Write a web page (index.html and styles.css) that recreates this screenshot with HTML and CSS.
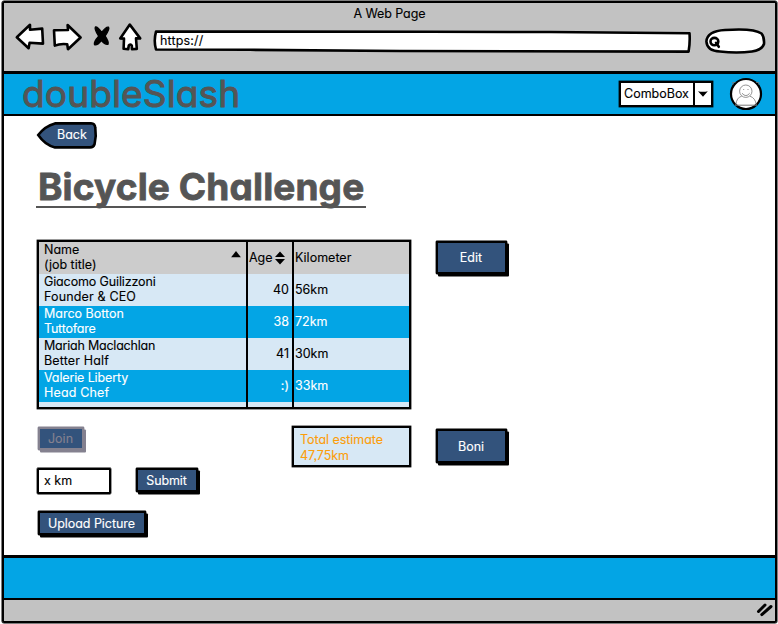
FILE: index.html
```html
<!DOCTYPE html>
<html lang="en">
<head>
<meta charset="utf-8">
<title>A Web Page</title>
<link rel="stylesheet" href="styles.css">
</head>
<body>
<div class="window">
  <header class="chrome">
    <div class="window-title">A Web Page</div>
    <div class="toolbar">
      <svg class="nav-icons" width="130" height="32" viewBox="14 22 130 32">
        <path class="outline" d="M16.8 37.3 L30 24.8 L30 29.8 L42.2 28.6 L43 43.6 L29.6 42.7 L28.6 48.2 Z"/>
        <path class="outline" d="M54 30.2 L68 30 L67.6 25 L80.6 37.5 L68 49.2 L67.2 44.2 Q60 43.4 54.8 45.6 Z"/>
        <path class="stop" d="M95.5 27 Q97.5 26.5 101.7 32.5 Q106 26.5 108.5 27.2 Q110 29 105 36 Q109 42 108 44.2 Q105 45 101.5 40.3 Q97 46 94.5 44.6 Q93.5 42 98.7 36.2 Q94 29 95.5 27 Z"/>
        <path class="outline" d="M129.8 24.6 L140.2 38.4 L136 38.4 L136.8 48.9 L132 49.2 L131.8 45.5 Q130 43.5 128.8 45.5 L128.2 49.2 L123.6 48.7 L124 38.6 L120.2 38.4 Z"/>
      </svg>
      <div class="url">
        <svg class="sketch" width="540" height="26" viewBox="152 28 540 26">
          <path class="outline" d="M156 31.6 L430 31.8 L550 32 L689.5 33.2 Q690.2 42 688.6 51.6 L400 51 L250 49.8 L156 49.5 Q153.5 41 156 31.6 Z"/>
        </svg>
        <span>https://</span>
      </div>
      <svg class="search" width="64" height="30" viewBox="703 26 64 30">
        <path class="outline" d="M706.4 41.5 Q707 31 725 30 Q754 28 761.5 33.5 Q764.5 37 764 44 Q762 50 752 51.5 Q737 53.5 720 51.5 Q707 51 706.4 41.5 Z"/>
        <ellipse class="outline" cx="714.4" cy="41.6" rx="3.9" ry="3.7"/>
        <path class="outline" d="M716 42.8 L718.8 46.8"/>
      </svg>
    </div>
  </header>
  <div class="banner">
    <div class="logo">doubleSlash</div>
    <div class="combo"><span class="combo-value">ComboBox</span><span class="combo-arrow"><svg width="12" height="8" viewBox="0 0 12 8"><path d="M1 1.2 Q6 2.2 10.8 1.2 L6 6.8 Z"/></svg></span></div>
    <svg class="avatar" width="34" height="34" viewBox="0 0 34 34">
      <circle cx="17" cy="17" r="15" fill="#fff" stroke="#000" stroke-width="2.2"/>
      <g fill="none" stroke="#777" stroke-width=".8">
        <circle cx="16.8" cy="14.2" r="6.2"/>
        <path d="M13 16.2 Q17 21 20.7 16.2 M14.7 12 v1 M19 12 v1 M6.8 28 Q7.5 20.5 12.7 19.2 M21 19.2 Q26.5 21 27.3 28"/>
        <path d="M6 28.2 H28" stroke-width="1"/>
        <path d="M3.5 5.5 h3 M27 5.5 h3 M3.8 5.5 v2.5 M30 5.5 v2.5"/>
      </g>
    </svg>
  </div>
  <main class="page">
    <a class="back">
      <svg class="sketch" width="62" height="30" viewBox="36 120 62 30"><path d="M38.2 135 Q45 126 55 123.4 L91 123.3 Q95 123.5 95.3 128 Q96.5 136 94.6 144 Q93.5 147.4 90 147.4 L55 147.4 Q45 145 38.2 135 Z"/></svg>
      <span class="back-text">Back</span>
    </a>
    <h1 class="headline">Bicycle Challenge</h1>
    <div class="board">
      <div class="people">
        <div class="row head"><div class="name">Name<br>(job title)<svg class="sort-up" width="10" height="7" viewBox="0 0 10 7"><path d="M5 0 L9.9 6.3 H.1 Z"/></svg></div><div class="age">Age<svg class="sort" width="12" height="14" viewBox="0 0 12 14"><path d="M6 .5 L11 6 H1 Z M1 8 H11 L6 13.5 Z"/></svg></div><div class="km">Kilometer</div></div>
        <div class="row"><div class="name"><span class="tight">Giacomo Guilizzoni</span><br><span class="loose">Founder &amp; CEO</span></div><div class="age">40</div><div class="km">56km</div></div>
        <div class="row picked"><div class="name">Marco Botton<br><span class="tighter">Tuttofare</span></div><div class="age">38</div><div class="km">72km</div></div>
        <div class="row"><div class="name"><span class="tighter">Mariah Maclachlan</span><br><span class="loose">Better Half</span></div><div class="age">41</div><div class="km">30km</div></div>
        <div class="row picked"><div class="name"><span class="tight">Valerie Liberty</span><br><span class="loose">Head Chef</span></div><div class="age">:)</div><div class="km">33km</div></div>
        <div class="row rest"><div class="name"></div><div class="age"></div><div class="km"></div></div>
      </div>
      <div class="button large edit">Edit</div>
      <div class="lower">
        <div class="entry">
          <div class="button join">Join</div>
          <div class="line"><div class="field">x km</div><div class="button submit">Submit</div></div>
          <div class="button upload">Upload Picture</div>
        </div>
        <div class="total">Total estimate<br>47,75km</div>
      </div>
      <div class="button large boni">Boni</div>
    </div>
  </main>
  <div class="footer-band"></div>
  <div class="status">
    <svg width="18" height="16" viewBox="0 0 18 16"><path class="grip" d="M2.5 9.5 L9 3 M5.8 12.6 L15 4.5"/></svg>
  </div>
</div>
</body>
</html>
```
FILE: styles.css
```css
* { box-sizing: border-box; }
body {
  margin: 0;
  padding: 1px 1px 1px 2px;
  background: #fff;
  font: 12.5px/15px Inter, "Liberation Sans", sans-serif;
  font-feature-settings: "cv11" 1, "ss03" 1;
  -webkit-text-stroke: .12px currentColor;
  color: #000;
}
.window {
  width: 775px;
  height: 622px;
  border: 2px solid #000;
  border-radius: 2px;
  box-shadow: 0 0 0 .5px #000;
  display: flex;
  flex-direction: column;
}
.outline { fill: #fff; stroke: #000; stroke-width: 2.6; stroke-linejoin: round; stroke-linecap: round; }
.stop { stroke: #000; stroke-width: 1.4; stroke-linejoin: round; }
.sketch { position: absolute; left: 0; top: 0; }
.chrome { height: 71px; flex: none; background: #c2c2c2; border-bottom: 3px solid #000; padding-top: 3px; }
.window-title { text-align: center; height: 16px; line-height: 16px; letter-spacing: -.1px; }
.toolbar { display: flex; padding-left: 10px; height: 32px; }
.nav-icons { flex: none; }
.url { position: relative; width: 540px; height: 26px; margin: 6px 11px 0 8px; padding: 5px 0 0 8px; letter-spacing: .15px; }
.url span { position: relative; }
.search { flex: none; margin-top: 4px; }
.banner {
  height: 42px; flex: none;
  background: #03a5e5;
  border-bottom: 2px solid #000;
  display: flex;
  align-items: center;
  padding: 0 12px 0 18px;
}
.logo { flex: 1; font-size: 37px; line-height: 40px; letter-spacing: .15px; color: #555; -webkit-text-stroke: 1px #555; }
.combo { display: flex; width: 94px; height: 26px; background: #fff; border: 2px solid #000; box-shadow: 0 0 0 .4px #000; margin-right: 16px; }
.combo-value { flex: 1; padding: 3px 0 0 3px; white-space: nowrap; }
.combo-arrow { width: 18px; border-left: 2px solid #000; display: flex; align-items: center; justify-content: center; }
.avatar { flex: none; }
.page { flex: 1; background: #fff; padding: 4px 0 0 32px; }
.back { display: block; position: relative; width: 62px; height: 30px; padding: 7px 0 0 21px; color: #fff; }
.back path { fill: #33537c; stroke: #000; stroke-width: 2.6; }
.back-text { position: relative; }
.headline {
  margin: 17px 0 32px;
  width: 330px; height: 41px;
  border-bottom: 2px solid #555;
  padding-left: 2px;
  font-size: 37px; line-height: 39px; font-weight: 700;
  letter-spacing: .13px;
  white-space: nowrap;
  color: #555;
  -webkit-text-stroke: .8px #555;
}
.board { display: grid; grid-template-columns: 374px 74px; column-gap: 25px; row-gap: 17px; padding-left: 1px; align-items: start; }
.people { width: 374px; height: 169px; border: 2px solid #000; box-shadow: 0 0 0 .4px #000; background: #d7e8f5; }
.row { display: grid; grid-template-columns: 209px 46px 1fr; height: 32px; background: #d7e8f5; }
.row > div { position: relative; white-space: nowrap; }
.row .name { padding: 0 0 0 5px; border-right: 2px solid #000; }
.row .age { border-right: 2px solid #000; text-align: right; padding: 8px 3px 0 0; }
.row .km { padding: 8px 0 0 1px; }
.row.head { background: #ccc; }
.row.head .age { text-align: left; padding-left: 1px; }
.row.picked { background: #03a5e5; color: #fff; }
.row.rest { height: 5px; overflow: hidden; }
.sort-up { position: absolute; right: 5px; top: 9px; }
.sort { position: absolute; left: 26px; top: 9px; }
.tight { letter-spacing: -.13px; }
.tighter { letter-spacing: -.22px; }
.loose { letter-spacing: .15px; }
.button {
  display: flex; align-items: center; justify-content: center;
  background: #33537c; color: #fff;
  border: 2px solid #000; border-radius: 1px;
  box-shadow: 0 0 0 .4px #000, 2px 2.5px 0 #000;
  padding-right: 1px;
  white-space: nowrap;
}
.large { width: 71px; height: 33px; }
.edit { margin-top: 1px; }
.boni { margin-top: 3px; height: 34px; }
.lower { display: flex; justify-content: space-between; }
.entry { display: flex; flex-direction: column; padding: 1px 0 0 1px; }
.join { width: 46px; height: 23px; border-color: #84818f; box-shadow: 0 0 0 .4px #84818f, 2px 2.5px 0 #84818f; color: #84818f; }
.line { display: flex; gap: 25px; margin: 18px 0 17px -1px; }
.field { width: 74px; height: 26px; border: 2px solid #000; box-shadow: 0 0 0 .4px #000; border-radius: 1px; padding: 3px 0 0 5px; }
.submit { width: 62px; height: 24px; letter-spacing: -.1px; }
.upload { width: 108px; height: 24px; letter-spacing: -.05px; }
.total { width: 119px; height: 41px; border: 2px solid #000; box-shadow: 0 0 0 .4px #000; background: #d7e8f5; color: #fc9e0a; padding: 4px 0 0 6px; line-height: 16px; letter-spacing: -.05px; }
.footer-band { height: 45px; flex: none; background: #03a5e5; border-top: 3px solid #000; border-bottom: 2px solid #000; }
.status { height: 21px; flex: none; background: #c2c2c2; display: flex; justify-content: flex-end; padding: 2px 1px 0 0; }
.grip { fill: none; stroke: #000; stroke-width: 3; stroke-linecap: round; }
```
